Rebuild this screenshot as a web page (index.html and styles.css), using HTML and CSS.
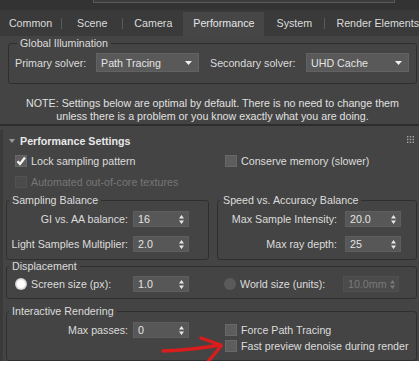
FILE: index.html
```html
<!DOCTYPE html>
<html lang="en">
<head>
    <meta charset="UTF-8">
    <meta name="viewport" content="width=device-width, initial-scale=1.0">
    <title>Render Setup - Performance</title>
    <link rel="stylesheet" href="styles.css">
</head>
<body>
    <div class="app">
        <div class="topstrip"><div class="topbox"></div></div>

        <!-- Tabs -->
        <nav class="tabs">
            <span class="tab">Common</span><span class="sep"></span>
            <span class="tab">Scene</span><span class="sep"></span>
            <span class="tab">Camera</span>
            <span class="tab active">Performance</span>
            <span class="tab">System</span><span class="sep"></span>
            <span class="tab wide">Render Elements</span>
        </nav>

        <!-- Global Illumination -->
        <div class="panel">
            <fieldset class="group gi">
                <legend>Global Illumination</legend>
                <div class="gi-row">
                    <span class="lbl-primary">Primary solver:</span>
                    <div class="dropdown">Path Tracing
                        <svg class="caret" width="7" height="4" viewBox="0 0 7 4"><path d="M0 0H7L3.5 4Z" fill="#f0f0f0"/></svg>
                    </div>
                    <span class="lbl-secondary">Secondary solver:</span>
                    <div class="dropdown">UHD Cache
                        <svg class="caret" width="7" height="4" viewBox="0 0 7 4"><path d="M0 0H7L3.5 4Z" fill="#f0f0f0"/></svg>
                    </div>
                </div>
            </fieldset>
            <p class="note">NOTE: Settings below are optimal by default. There is no need to change them<br>unless there is a problem or you know exactly what you are doing.</p>
        </div>

        <div class="divider"></div>

        <!-- Performance Settings rollout -->
        <div class="rollout">
            <div class="rollout-head">
                <svg class="tri" width="6" height="4" viewBox="0 0 6 4"><path d="M0 0H6L3 4Z" fill="#9a9a9a"/></svg>
                <span class="rollout-title">Performance Settings</span>
                <svg class="grip" width="7" height="7" viewBox="0 0 7 7" fill="#a8a8a8">
                    <rect x="0" y="0" width="1.4" height="1.4"/><rect x="2.8" y="0" width="1.4" height="1.4"/><rect x="5.6" y="0" width="1.4" height="1.4"/>
                    <rect x="0" y="2.8" width="1.4" height="1.4"/><rect x="2.8" y="2.8" width="1.4" height="1.4"/><rect x="5.6" y="2.8" width="1.4" height="1.4"/>
                    <rect x="0" y="5.6" width="1.4" height="1.4"/><rect x="2.8" y="5.6" width="1.4" height="1.4"/><rect x="5.6" y="5.6" width="1.4" height="1.4"/>
                </svg>
            </div>

            <div class="checks">
                <div class="check">
                    <span class="box"><svg width="10" height="10" viewBox="0 0 10 10"><path d="M1.5 5.2L4 8L9 1.5" fill="none" stroke="#f4f4f4" stroke-width="2.3"/></svg></span>
                    Lock sampling pattern
                </div>
                <div class="check">
                    <span class="box"></span>
                    Conserve memory (slower)
                </div>
                <div class="check disabled">
                    <span class="box"></span>
                    Automated out-of-core textures
                </div>
            </div>

            <div class="pair">
                <fieldset class="group sampling">
                    <legend>Sampling Balance</legend>
                    <div class="field">
                        <span class="flabel">GI vs. AA balance:</span>
                        <div class="spin">16<svg width="5" height="9" viewBox="0 0 5 9"><path d="M0 3.5H5L2.5 0ZM0 5.5H5L2.5 9Z" fill="#e8e8e8"/></svg></div>
                    </div>
                    <div class="field">
                        <span class="flabel">Light Samples Multiplier:</span>
                        <div class="spin">2.0<svg width="5" height="9" viewBox="0 0 5 9"><path d="M0 3.5H5L2.5 0ZM0 5.5H5L2.5 9Z" fill="#e8e8e8"/></svg></div>
                    </div>
                </fieldset>
                <fieldset class="group speed">
                    <legend>Speed vs. Accuracy Balance</legend>
                    <div class="field">
                        <span class="flabel">Max Sample Intensity:</span>
                        <div class="spin">20.0<svg width="5" height="9" viewBox="0 0 5 9"><path d="M0 3.5H5L2.5 0ZM0 5.5H5L2.5 9Z" fill="#e8e8e8"/></svg></div>
                    </div>
                    <div class="field">
                        <span class="flabel">Max ray depth:</span>
                        <div class="spin">25<svg width="5" height="9" viewBox="0 0 5 9"><path d="M0 3.5H5L2.5 0ZM0 5.5H5L2.5 9Z" fill="#e8e8e8"/></svg></div>
                    </div>
                </fieldset>
            </div>

            <fieldset class="group displacement">
                <legend>Displacement</legend>
                <div class="cols">
                    <div class="radio-field left">
                        <span class="radio on"></span>
                        <span class="rlabel">Screen size (px):</span>
                        <div class="spin">1.0<svg width="5" height="9" viewBox="0 0 5 9"><path d="M0 3.5H5L2.5 0ZM0 5.5H5L2.5 9Z" fill="#e8e8e8"/></svg></div>
                    </div>
                    <div class="radio-field right">
                        <span class="radio"></span>
                        <span class="rlabel">World size (units):</span>
                        <div class="spin off">10.0mm<svg width="5" height="9" viewBox="0 0 5 9"><path d="M0 3.5H5L2.5 0ZM0 5.5H5L2.5 9Z" fill="#7a7a7a"/></svg></div>
                    </div>
                </div>
            </fieldset>

            <fieldset class="group interactive">
                <legend>Interactive Rendering</legend>
                <div class="cols">
                    <div class="field">
                        <span class="flabel">Max passes:</span>
                        <div class="spin">0<svg width="5" height="9" viewBox="0 0 5 9"><path d="M0 3.5H5L2.5 0ZM0 5.5H5L2.5 9Z" fill="#e8e8e8"/></svg></div>
                    </div>
                    <div class="stack">
                        <div class="check small"><span class="box"></span>Force Path Tracing</div>
                        <div class="check small"><span class="box"></span>Fast preview denoise during render</div>
                    </div>
                </div>
            </fieldset>
        </div>

        <!-- red pointer drawn over the screenshot -->
        <svg class="pointer" width="70" height="34" viewBox="155 334 70 34">
            <path d="M163 351Q192 350 220 345M201 338L221 345M221 346Q213 356 205 365" fill="none" stroke="#d91c1c" stroke-width="3.4" stroke-linecap="round"/>
        </svg>
    </div>
</body>
</html>
```

FILE: styles.css
```css
* {
    box-sizing: border-box;
}
body {
    margin: 0;
    background-color: #ffffff;
    font-family: "Liberation Sans", Arial, sans-serif;
    font-size: 10.7px;
    color: #dcdcdc;
}
.app {
    position: relative;
    width: 419px;
    height: 361px;
    background-color: #444444;
    overflow: hidden;
}
.topstrip {
    height: 10px;
    background-color: #333333;
    padding-left: 93px;
}
.topbox {
    width: 302px;
    height: 3px;
    background-color: #3c3c3c;
    border: 1px solid #5a5a5a;
    border-top: none;
}

/* tabs */
.tabs {
    display: flex;
    align-items: center;
    height: 26px;
    background-color: #3a3a3a;
    white-space: nowrap;
}
.tab {
    width: 61px;
    text-align: center;
    line-height: 26px;
}
.tab:first-child {
    width: 62px;
}
.tab.active {
    width: 82px;
    height: 24px;
    margin-top: 2px;
    line-height: 22px;
    background-color: #464646;
    color: #e6e6e6;
}
.tab.wide {
    width: auto;
    padding-left: 11px;
}
.sep {
    width: 1px;
    height: 11px;
    background-color: #5a5a5a;
}

/* group boxes */
.group {
    margin: 0;
    border: 1px solid #2f2f2f;
    border-radius: 3px;
    min-width: 0;
}
.group legend {
    padding: 0 3px;
    margin-left: 2px;
    line-height: 13px;
}
.panel {
    padding: 1px 2px 0 8px;
}
.gi {
    padding: 3px 0 11px 6px;
}
.gi-row {
    display: flex;
    align-items: center;
}
.lbl-primary {
    width: 81px;
}
.lbl-secondary {
    width: 107px;
    padding-left: 11px;
}
.dropdown {
    display: flex;
    align-items: center;
    justify-content: space-between;
    width: 103px;
    height: 19px;
    padding: 0 6px 0 4px;
    background-color: #595959;
    border: 1px solid #626262;
    color: #e4e4e4;
}
.note {
    margin: 13px 0 1px;
    text-align: center;
    line-height: 13px;
    color: #e0e0e0;
}
.divider {
    height: 2px;
    background-color: #2d2d2d;
}

/* rollout */
.rollout {
    border-left: 3px solid #3a3a3a;
    height: 240px;
}
.rollout-head {
    display: flex;
    align-items: center;
    height: 21px;
    margin-top: 4px;
    padding-left: 6px;
}
.tri {
    margin-right: 5px;
}
.rollout-title {
    font-weight: bold;
    color: #e8e8e8;
}
.grip {
    margin-left: auto;
    margin-right: 5px;
    margin-top: -2px;
}
.checks {
    display: grid;
    grid-template-columns: 210px 1fr;
    row-gap: 1px;
    padding-left: 12px;
}
.check {
    display: flex;
    align-items: center;
    gap: 4px;
    height: 20px;
    white-space: nowrap;
}
.check.small {
    height: 16px;
}
.box {
    display: flex;
    align-items: center;
    justify-content: center;
    width: 12px;
    height: 12px;
    background-color: #5d5d5d;
    border: 1px solid #686868;
}
.check.disabled {
    color: #767676;
}
.check.disabled .box {
    background-color: #4b4b4b;
    border-color: #525252;
}
.pair {
    display: flex;
    gap: 8px;
    margin-top: 2px;
    padding: 0 2px 0 3px;
}
.sampling {
    width: 203px;
    padding: 4px 0 7px 0;
}
.speed {
    flex: 1;
    padding: 4px 0 7px 0;
}
.field {
    display: flex;
    align-items: center;
    height: 16px;
}
.field + .field {
    margin-top: 9px;
}
.flabel {
    width: 121px;
    margin-right: 5px;
    text-align: right;
    white-space: nowrap;
}
.speed .flabel {
    width: 119px;
    margin-right: 8px;
}
.spin {
    display: flex;
    align-items: center;
    justify-content: space-between;
    width: 56px;
    height: 16px;
    padding: 0 4px 0 4px;
    background-color: #575757;
    border: 1px solid #5e5e5e;
    color: #e4e4e4;
}
.spin.off {
    background-color: #4b4b4b;
    border-color: #505050;
    color: #7a7a7a;
    padding-right: 3px;
}
.displacement {
    margin: 0 2px 0 3px;
    padding: 3px 0 6px 0;
}
.interactive {
    margin: 6px 2px 0 3px;
    padding: 4px 0 6px 0;
}
.cols {
    display: grid;
    grid-template-columns: 209px 1fr;
    align-items: start;
}
.radio-field {
    display: flex;
    align-items: center;
    height: 16px;
    white-space: nowrap;
}
.radio-field.left {
    padding-left: 8px;
}
.radio-field.left .rlabel {
    width: 102px;
}
.radio-field.right {
    padding-left: 8px;
}
.radio-field.right .rlabel {
    width: 103px;
}
.radio {
    width: 12px;
    height: 12px;
    margin-right: 4px;
    border-radius: 50%;
    background-color: #5a5a5a;
}
.radio.on {
    background: radial-gradient(circle, #ffffff 0 40%, #d0d0d0 65%, #b0b0b0 100%);
}
.stack {
    padding-left: 9px;
}
.pointer {
    position: absolute;
    left: 155px;
    top: 334px;
}
```
